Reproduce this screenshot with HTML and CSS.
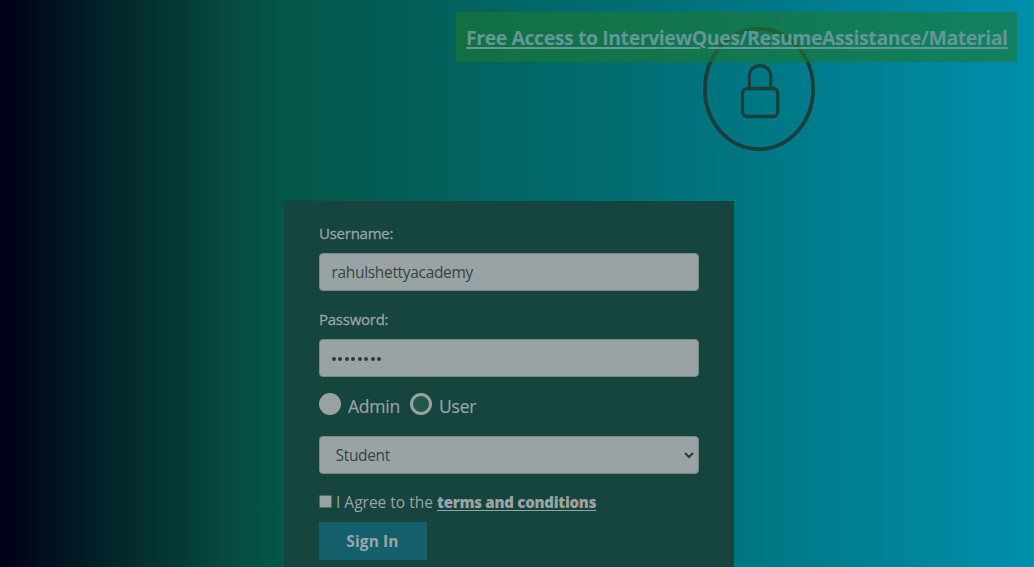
FILE: index.html
```html
<!DOCTYPE html>
<html lang="en">
<head>
<meta charset="utf-8">
<title>Login</title>
<link rel="stylesheet" href="styles.css">
</head>
<body>
<svg class="lock" width="112" height="124" viewBox="0 0 112 124" fill="none" stroke="#183f3b" aria-hidden="true">
  <ellipse cx="56" cy="62" rx="54.1" ry="60.1" stroke-width="3.8"/>
  <rect x="39.5" y="61.5" width="35.3" height="28" rx="5" stroke-width="3.3"/>
  <path d="M46.3 61V49a10.7 10.4 0 0 1 21.4 0V61" stroke-width="3.2"/>
</svg>
<header class="banner"><a class="banner-link" href="#">Free Access to InterviewQues/ResumeAssistance/Material</a></header>
<main class="login">
  <form class="form">
    <label class="label" for="username">Username:</label>
    <input class="control" id="username" type="text" value="rahulshettyacademy">
    <label class="label label-pass" for="password">Password:</label>
    <div class="control dots" id="password"><i></i><i></i><i></i><i></i><i></i><i></i><i></i><i></i></div>
    <div class="roles">
      <span class="radio radio-on"></span><span class="role role-admin">Admin</span>
      <span class="radio"></span><span class="role role-user">User</span>
    </div>
    <div class="control select"><span>Student</span>
      <svg width="10" height="7" viewBox="0 0 10 7" fill="none" stroke="#2b3a40" stroke-width="2"><path d="M1 1l4 4 4-4"/></svg>
    </div>
    <div class="terms"><span class="check"></span><span class="agree">I Agree to the</span><a class="terms-link" href="#">terms and conditions</a></div>
    <button class="submit" type="button">Sign In</button>
  </form>
</main>
</body>
</html>
```
FILE: styles.css
```css
* { box-sizing: border-box; }
html { height: 100%; overflow: hidden; }
body {
  margin: 0;
  height: 567px;
  overflow: hidden;
  position: relative;
  font: 16px/24px "Open Sans", "Noto Sans", sans-serif;
  color: #9aa4a3;
  background: linear-gradient(90deg, #010016 0, #065143 24%, #045648 27.5%, #007580 71%, #008fad 100%);
}
.lock { position: absolute; left: 703px; top: 27px; }
.banner {
  position: relative;
  display: flex;
  align-items: center;
  width: 561px;
  height: 50px;
  margin: 12px 17px 0 auto;
  padding: 2px 0 0 10px;
  background: rgba(29, 122, 49, .6);
}
.banner-link {
  font-size: 19.5px;
  line-height: 30px;
  font-weight: 700;
  letter-spacing: -.435px;
  white-space: nowrap;
  color: #659699;
  text-decoration: underline;
  text-decoration-thickness: 2px;
  text-underline-offset: 2px;
}
.login { width: 450px; margin: 139px 0 0 284px; height: 366px; background: #16443f; }
.form { display: flex; flex-direction: column; width: 415px; padding: 20px 0 0 35px; }
.label { height: 32px; font-size: 15px; letter-spacing: -.25px; -webkit-text-stroke: .3px currentColor; }
.label-pass { margin-top: 16px; }
.control {
  display: flex;
  align-items: center;
  width: 380px;
  height: 38px;
  padding: 0 11.5px;
  border: 1px solid #778987;
  border-radius: 4px;
  background: #99a3a3;
  color: #354348;
  font: 15.5px/24px "Open Sans", sans-serif;
  letter-spacing: -.32px;
  outline: none;
}
.dots { gap: 2.5px; padding-top: 2px; }
.dots i { width: 4px; height: 4px; border-radius: 50%; background: #2c3a40; }
.roles { display: flex; height: 59px; padding-top: 16px; align-items: flex-start; }
.radio { width: 22px; height: 22px; border: 3px solid #98a3a1; border-radius: 50%; background: #215849; }
.radio-on { background: #98a3a1; }
.role { margin: 0 0 0 7px; font-size: 17.5px; line-height: 26px; letter-spacing: -.2px; -webkit-text-stroke: .2px currentColor; }
.role-admin { width: 62px; }
.select { justify-content: space-between; padding: 0 4px 0 15.5px; }
.terms { display: flex; align-items: center; height: 24px; margin-top: 16px; white-space: nowrap; }
.check { width: 13px; height: 13px; border: 1px solid #596765; border-radius: 1px; background: #99a3a2; margin: -1px 4px 0 0; }
.agree { width: 101px; font-size: 15.5px; letter-spacing: 0; }
.terms-link { font-size: 15px; font-weight: 800; letter-spacing: -.25px; color: inherit; text-decoration: underline; text-decoration-thickness: 1px; text-underline-offset: 2px; }
.submit {
  width: 108px;
  height: 38px;
  margin-top: 8px;
  padding: 0 1px 0 0;
  border: 0;
  background: #13606c;
  color: #9aa6a6;
  font: 700 15.5px/24px "Open Sans", sans-serif;
  letter-spacing: .1px;
}
```
